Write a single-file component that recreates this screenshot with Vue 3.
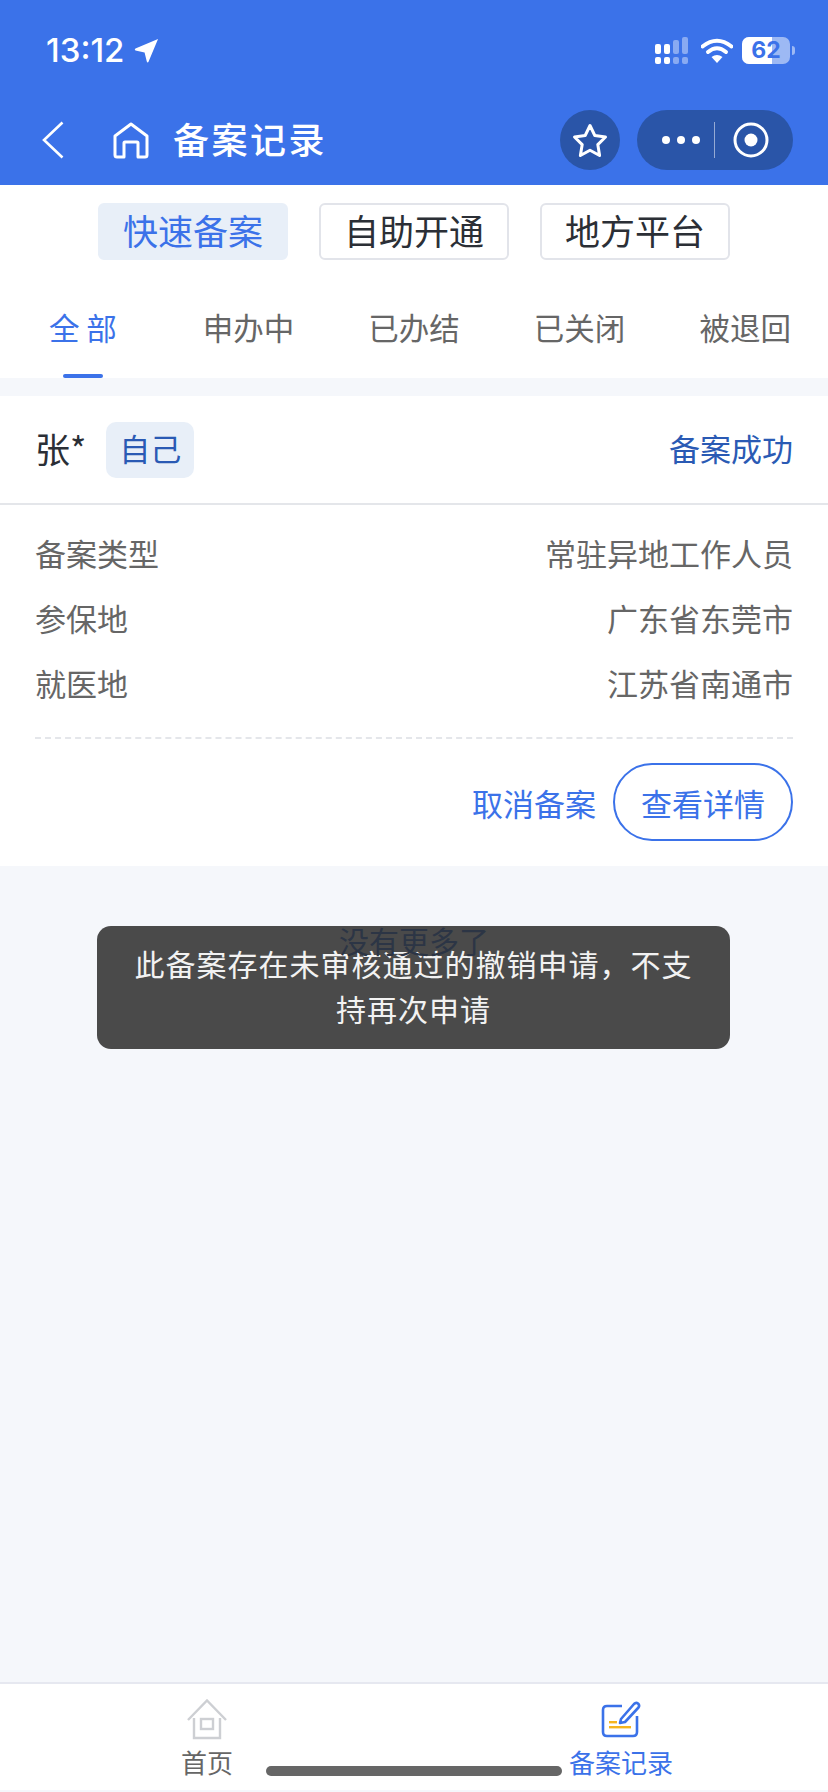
<script setup>
const filters = [
  { label: '快速备案', active: true },
  { label: '自助开通', active: false },
  { label: '地方平台', active: false },
];
const tabs = ['全 部', '申办中', '已办结', '已关闭', '被退回'];
const rows = [
  { label: '备案类型', value: '常驻异地工作人员' },
  { label: '参保地', value: '广东省东莞市' },
  { label: '就医地', value: '江苏省南通市' },
];
</script>

<template>
  <div class="page">
    <header class="header">
      <div class="status">
        <div class="time">
          <span>13:12</span>
          <svg class="loc" width="25" height="25" viewBox="0 0 26 26">
            <path d="M25 1 L15 25 Q14 26 13.300 24.500 L11 15 L1.500 13 Q0 12 1.500 11 Z" fill="#fff" />
          </svg>
        </div>
        <div class="status-right">
          <svg width="34" height="27" viewBox="0 0 34 27">
            <rect x="0" y="7" width="6" height="10" rx="2" fill="#fff" />
            <rect x="9" y="7" width="6" height="10" rx="2" fill="#fff" />
            <rect x="18" y="3" width="6" height="14" rx="2" fill="#fff" opacity=".4" />
            <rect x="27" y="0" width="6" height="17" rx="2" fill="#fff" opacity=".4" />
            <rect x="0" y="20" width="6" height="7" rx="2" fill="#fff" />
            <rect x="9" y="20" width="6" height="7" rx="2" fill="#fff" />
            <rect x="18" y="20" width="6" height="7" rx="2" fill="#fff" opacity=".4" />
            <rect x="27" y="20" width="6" height="7" rx="2" fill="#fff" opacity=".4" />
          </svg>
          <svg class="wifi" width="32" height="25" viewBox="0 0 32 25">
            <path d="M1.500 8.500 Q16 -3 30.500 8.500" fill="none" stroke="#fff" stroke-width="4" stroke-linecap="round" />
            <path d="M7 14 Q16 6.500 25 14" fill="none" stroke="#fff" stroke-width="4" stroke-linecap="round" />
            <path d="M16 25 L10.500 19 Q16 15 21.500 19 Z" fill="#fff" />
          </svg>
          <div class="battery">
            <div class="battery-fill"></div>
            <span class="battery-num">62</span>
          </div>
          <div class="battery-nub"></div>
        </div>
      </div>
      <div class="nav">
        <svg class="back" width="22" height="38" viewBox="0 0 22 38">
          <path d="M20.500 1.500 L2 19 L20.500 36.500" fill="none" stroke="#fff" stroke-width="2.600" />
        </svg>
        <svg class="home" width="36" height="37" viewBox="0 0 36 37">
          <path d="M2 14 L18 2 L34 14 V33 Q34 35 32 35 H25 V21 Q25 20 24 20 H12 Q11 20 11 21 V35 H4 Q2 35 2 33 Z" fill="none" stroke="#fff" stroke-width="3" stroke-linejoin="round" />
        </svg>
        <div class="title">备案记录</div>
        <div class="star-btn">
          <svg width="36" height="35" viewBox="0 0 36 35">
            <path d="M18 2.500 L22.800 12.500 L33.500 14 L25.800 21.600 L27.600 32.500 L18 27.300 L8.400 32.500 L10.200 21.600 L2.500 14 L13.200 12.500 Z" fill="none" stroke="#fff" stroke-width="3" stroke-linejoin="round" />
          </svg>
        </div>
        <div class="capsule">
          <div class="dots">
            <i></i><i></i><i></i>
          </div>
          <div class="capsule-line"></div>
          <svg width="36" height="36" viewBox="0 0 36 36">
            <circle cx="18" cy="18" r="16" fill="none" stroke="#fff" stroke-width="3" />
            <circle cx="18" cy="18" r="6.500" fill="#fff" />
          </svg>
        </div>
      </div>
    </header>

    <div class="filters">
      <div v-for="f in filters" :key="f.label" class="filter" :class="{ active: f.active }">{{ f.label }}</div>
    </div>

    <div class="tabs">
      <div v-for="(t, i) in tabs" :key="t" class="tab" :class="{ on: i === 0 }">
        <span>{{ t }}</span>
        <i v-if="i === 0" class="tab-line"></i>
      </div>
    </div>

    <section class="card">
      <div class="card-head">
        <span class="name">张*</span>
        <span class="tag">自己</span>
        <span class="state">备案成功</span>
      </div>
      <div class="card-body">
        <div v-for="r in rows" :key="r.label" class="row">
          <span>{{ r.label }}</span>
          <span>{{ r.value }}</span>
        </div>
        <div class="dash"></div>
        <div class="actions">
          <span class="cancel">取消备案</span>
          <span class="detail">查看详情</span>
        </div>
      </div>
    </section>

    <main class="rest">
      <div class="no-more">没有更多了</div>
    </main>

    <nav class="tabbar">
      <div class="bar-item">
        <svg width="40" height="41" viewBox="0 0 40 41">
          <path d="M1 21 L20 1.500 L39 21" fill="none" stroke="#cdcfd3" stroke-width="2.400" />
          <path d="M7 19 V39 H33 V19" fill="none" stroke="#cdcfd3" stroke-width="2.400" />
          <rect x="14" y="20" width="12" height="10" fill="none" stroke="#cdcfd3" stroke-width="2.400" />
        </svg>
        <span>首页</span>
      </div>
      <div class="bar-item on">
        <svg width="40" height="37" viewBox="0 0 40 37">
          <path d="M21 5 H6 Q2 5 2 9 V31 Q2 35 6 35 H32 Q36 35 36 31 V15" fill="none" stroke="#3b72e9" stroke-width="2.600" />
          <path d="M20 18 L33 3 Q35 1 37 2.500 Q39 4.500 37.500 6.500 L24 21 L19 22 Z" fill="none" stroke="#3b72e9" stroke-width="2.600" stroke-linejoin="round" />
          <rect x="8" y="20" width="8" height="2.400" fill="#f5b51e" />
          <rect x="8" y="25" width="22" height="2.400" fill="#f5b51e" />
        </svg>
        <span>备案记录</span>
      </div>
    </nav>

    <div class="toast">此备案存在未审核通过的撤销申请，不支持再次申请</div>
    <div class="indicator"></div>
  </div>
</template>

<style scoped>
.page {
  position: relative;
  display: flex;
  flex-direction: column;
  height: 1792px;
  overflow: hidden;
  background: #f5f7fb;
  font-family: "Noto Sans CJK SC", "Noto Sans", sans-serif;
}

.header {
  height: 185px;
  background: #3b72e9;
  color: #fff;
}

.status {
  display: flex;
  justify-content: space-between;
  align-items: center;
  height: 100px;
  padding: 0 33px 0 46px;
}

.time {
  display: flex;
  align-items: center;
  gap: 10px;
  font-family: Inter, sans-serif;
  font-size: 33px;
  font-weight: 500;
}

.status-right {
  display: flex;
  align-items: center;
}

.wifi {
  margin-left: 12px;
}

.battery {
  position: relative;
  width: 48px;
  height: 27px;
  margin-left: 9px;
  border-radius: 7px;
  overflow: hidden;
  background: rgba(255, 255, 255, 0.5);
  text-align: center;
}

.battery-fill {
  position: absolute;
  left: 0;
  top: 0;
  bottom: 0;
  width: 30px;
  background: #fff;
}

.battery-num {
  position: relative;
  font-family: Inter, sans-serif;
  font-size: 23px;
  font-weight: 700;
  line-height: 27px;
  color: #3b72e9;
}

.battery-nub {
  width: 3px;
  height: 9px;
  margin-left: 2px;
  border-radius: 0 3px 3px 0;
  background: rgba(255, 255, 255, 0.5);
}

.nav {
  display: flex;
  align-items: center;
  height: 80px;
  padding: 0 35px 0 42px;
}

.home {
  margin-left: 49px;
}

.title {
  flex: 1;
  margin-left: 24px;
  padding-bottom: 4px;
  font-size: 36px;
  font-weight: 500;
  letter-spacing: 2.500px;
}

.star-btn {
  display: flex;
  align-items: center;
  justify-content: center;
  width: 60px;
  height: 60px;
  border-radius: 50%;
  background: #2a55a8;
}

.capsule {
  display: flex;
  align-items: center;
  width: 156px;
  height: 60px;
  margin-left: 17px;
  padding-left: 25px;
  box-sizing: border-box;
  border-radius: 30px;
  background: #2a55a8;
}

.dots {
  display: flex;
  gap: 7px;
}

.dots i {
  width: 8px;
  height: 8px;
  border-radius: 50%;
  background: #fff;
}

.capsule-line {
  width: 1px;
  height: 36px;
  margin: 0 18px 0 14px;
  background: rgba(255, 255, 255, 0.5);
}

.filters {
  display: flex;
  justify-content: center;
  gap: 31.500px;
  padding: 18px 0 0;
  background: #fff;
}

.filter {
  display: flex;
  align-items: center;
  justify-content: center;
  width: 189.500px;
  height: 57px;
  padding-bottom: 4px;
  box-sizing: border-box;
  border: 2px solid #e2e4ea;
  border-radius: 6px;
  font-size: 35px;
  color: #2b2f36;
}

.filter.active {
  border-color: #e8eff8;
  background: #e8eff8;
  color: #3b72e9;
}

.tabs {
  display: grid;
  grid-template-columns: repeat(5, 1fr);
  height: 118px;
  background: #fff;
}

.tab {
  position: relative;
  padding-top: 46px;
  text-align: center;
  font-size: 30.500px;
  line-height: 42px;
  color: #666;
}

.tab.on {
  color: #3b72e9;
}

.tab-line {
  position: absolute;
  left: 50%;
  bottom: 0;
  width: 40px;
  height: 4px;
  margin-left: -20px;
  border-radius: 2px;
  background: #3b72e9;
}

.card {
  margin-top: 18px;
  background: #fff;
}

.card-head {
  display: flex;
  align-items: center;
  height: 107px;
  padding: 0 35px;
  border-bottom: 2px solid #e4e6ea;
}

.name {
  margin-bottom: 4px;
  font-size: 35px;
  color: #2b2f36;
}

.tag {
  display: flex;
  align-items: center;
  justify-content: center;
  width: 88px;
  height: 56px;
  margin-left: 20px;
  padding-bottom: 4px;
  box-sizing: border-box;
  border-radius: 10px;
  background: #e8eff8;
  font-size: 31px;
  color: #2a5ab4;
}

.state {
  margin-left: auto;
  margin-bottom: 4px;
  font-size: 31px;
  color: #2a5ab4;
}

.card-body {
  padding: 15px 35px 25px;
}

.row {
  display: flex;
  justify-content: space-between;
  height: 65px;
  font-size: 31px;
  line-height: 65px;
  color: #666;
}

.dash {
  margin-top: 22px;
  border-top: 2px dashed #e4e6ea;
}

.actions {
  display: flex;
  align-items: center;
  justify-content: flex-end;
  gap: 17px;
  margin-top: 24px;
}

.cancel {
  font-size: 31px;
  color: #3b72e9;
}

.detail {
  display: flex;
  align-items: center;
  justify-content: center;
  width: 180px;
  height: 78px;
  box-sizing: border-box;
  border: 2px solid #3b72e9;
  border-radius: 39px;
  font-size: 31px;
  color: #3b72e9;
}

.rest {
  flex: 1;
}

.no-more {
  position: relative;
  z-index: 2;
  margin-top: 54px;
  text-align: center;
  font-size: 30px;
  line-height: 40px;
  color: #2c3545;
}

.tabbar {
  display: grid;
  grid-template-columns: 1fr 1fr;
  height: 108px;
  margin-bottom: 2px;
  box-sizing: border-box;
  border-top: 2px solid #e6e8f0;
  background: #fff;
}

.bar-item {
  display: flex;
  flex-direction: column;
  align-items: center;
  padding-top: 15px;
  font-size: 26px;
  line-height: 34px;
  color: #666;
}

.bar-item svg {
  display: block;
  height: 41px;
  margin-bottom: 5px;
}

.bar-item.on {
  color: #3b72e9;
}

.toast {
  position: absolute;
  z-index: 1;
  left: 97px;
  top: 926px;
  width: 633px;
  height: 123px;
  box-sizing: border-box;
  padding: 15px 30px;
  border-radius: 14px;
  background: #4a4a4a;
  text-align: center;
  font-size: 30px;
  letter-spacing: 1px;
  line-height: 45px;
  color: #f2f2f2;
}

.indicator {
  position: absolute;
  z-index: 3;
  left: 266px;
  top: 1766px;
  width: 296px;
  height: 10px;
  border-radius: 5px;
  background: #666;
}
</style>
